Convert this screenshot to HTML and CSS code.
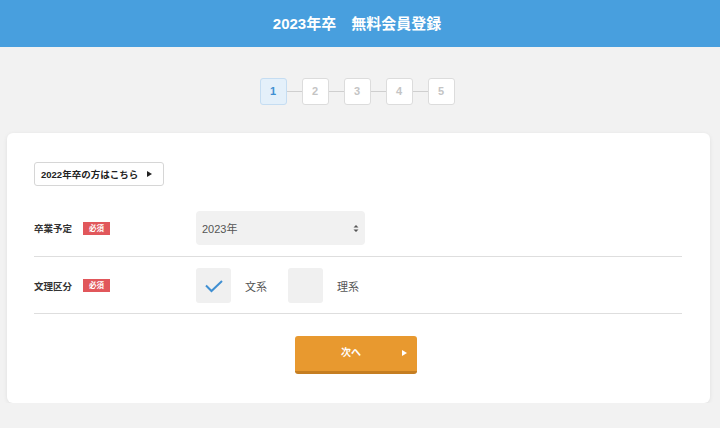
FILE: index.html
```html
<!DOCTYPE html>
<html lang="ja">
<head>
  <meta charset="UTF-8">
  <meta name="viewport" content="width=device-width, initial-scale=1.0">
  <title>2023年卒 無料会員登録</title>
  <link rel="stylesheet" href="styles.css">
</head>
<body>
  <header class="header">
    <h1 class="title">2023年卒　無料会員登録</h1>
  </header>

  <div class="page">
    <ol class="steps">
      <li class="step current">1</li>
      <li class="line"></li>
      <li class="step">2</li>
      <li class="line"></li>
      <li class="step">3</li>
      <li class="line"></li>
      <li class="step">4</li>
      <li class="line"></li>
      <li class="step">5</li>
    </ol>

    <form class="card">
      <a href="javascript:;" class="prev-year">2022年卒の方はこちら<span class="tri"></span></a>

      <div class="row row-select">
        <div class="label">卒業予定<span class="required">必須</span></div>
        <div class="field">
          <div class="select">
            <span>2023年</span>
            <svg class="updown" width="6" height="9" viewBox="0 0 6 9">
              <path d="M0.5 3.5 L3 1 L5.5 3.5 Z M0.5 5.5 L3 8 L5.5 5.5 Z" fill="#555"/>
            </svg>
          </div>
        </div>
      </div>

      <div class="row row-check">
        <div class="label">文理区分<span class="required">必須</span></div>
        <div class="field">
          <label class="choice">
            <span class="box checked">
              <svg width="20" height="14" viewBox="0 0 20 14">
                <path d="M2 6.5 L7.5 12 L18 2" fill="none" stroke="#3f8fd2" stroke-width="2"/>
              </svg>
            </span>
            <span class="choice-text">文系</span>
          </label>
          <label class="choice">
            <span class="box"></span>
            <span class="choice-text">理系</span>
          </label>
        </div>
      </div>

      <div class="actions">
        <a href="javascript:;" class="next">次へ<span class="tri white"></span></a>
      </div>
    </form>
  </div>
</body>
</html>
```

FILE: styles.css
```css
* {
  box-sizing: border-box;
}

body {
  margin: 0;
  background-color: #f2f2f2;
  font-family: "Liberation Sans", "Noto Sans CJK JP", sans-serif;
  color: #333;
}

a {
  text-decoration: none;
}

.header {
  height: 47px;
  background-color: #489fde;
  padding-right: 6px;
}

.title {
  margin: 0;
  text-align: center;
  line-height: 47px;
  font-size: 15px;
  font-weight: bold;
  color: #fff;
}

.page {
  margin-right: 6px;
}

.steps {
  display: flex;
  justify-content: center;
  align-items: center;
  margin: 31px 0 0;
  padding: 0;
  list-style: none;
}

.step {
  width: 27px;
  height: 27px;
  border: 1.5px solid #dcdcdc;
  border-radius: 3px;
  background-color: #fff;
  text-align: center;
  line-height: 24px;
  font-size: 11px;
  font-weight: bold;
  color: #c4c4c4;
}

.step.current {
  background-color: #e4f0fa;
  border-color: #c5ddf2;
  color: #3f8fd2;
}

.line {
  width: 15px;
  height: 1px;
  background-color: #cfcfcf;
}

.card {
  display: block;
  margin: 28px 4px 0 7px;
  padding: 29px 28px 29px 27px;
  background-color: #fff;
  border-radius: 6px;
  box-shadow: 0 1px 4px rgba(0, 0, 0, 0.08);
}

.prev-year {
  display: inline-flex;
  align-items: center;
  height: 24px;
  padding: 0 11px 0 6px;
  border: 1px solid #d6d6d6;
  border-radius: 3px;
  font-size: 9.5px;
  font-weight: bold;
  color: #222;
}

.tri {
  display: inline-block;
  width: 0;
  height: 0;
  margin-left: 9px;
  border-left: 5px solid #222;
  border-top: 3.5px solid transparent;
  border-bottom: 3.5px solid transparent;
}

.tri.white {
  border-left-color: #fff;
}

.row {
  display: flex;
  align-items: center;
  border-bottom: 1.5px solid #dedede;
}

.row-select {
  margin-top: 25px;
  padding-bottom: 11px;
}

.row-check {
  padding: 11px 0 10px;
}

.label {
  display: flex;
  align-items: center;
  width: 162px;
  font-size: 9.5px;
  font-weight: bold;
  color: #333;
}

.required {
  display: inline-block;
  margin-left: 11px;
  width: 27px;
  height: 13px;
  line-height: 13px;
  text-align: center;
  background-color: #e1575b;
  color: #fff;
  font-size: 7.5px;
  font-weight: bold;
}

.field {
  display: flex;
  align-items: center;
}

.select {
  display: flex;
  justify-content: space-between;
  align-items: center;
  width: 169px;
  height: 34px;
  padding: 0 6px 0 6px;
  border-radius: 4px;
  background-color: #f1f1f1;
  font-size: 11px;
  color: #555;
}

.choice {
  display: flex;
  align-items: center;
  margin-right: 21px;
}

.box {
  display: flex;
  justify-content: center;
  align-items: center;
  width: 35px;
  height: 35px;
  border-radius: 3px;
  background-color: #f0f0f0;
}

.choice-text {
  margin-left: 14px;
  font-size: 11px;
  color: #555;
}

.actions {
  display: flex;
  justify-content: center;
  margin-top: 22px;
  padding-right: 4px;
}

.next {
  position: relative;
  display: block;
  width: 122px;
  height: 38px;
  padding-right: 10px;
  line-height: 34px;
  text-align: center;
  background-color: #e8992f;
  border-bottom: 3px solid #c57e22;
  border-radius: 3px;
  font-size: 10px;
  font-weight: bold;
  color: #fff;
}

.next .tri {
  position: absolute;
  right: 10px;
  top: 14px;
  margin: 0;
}
```
